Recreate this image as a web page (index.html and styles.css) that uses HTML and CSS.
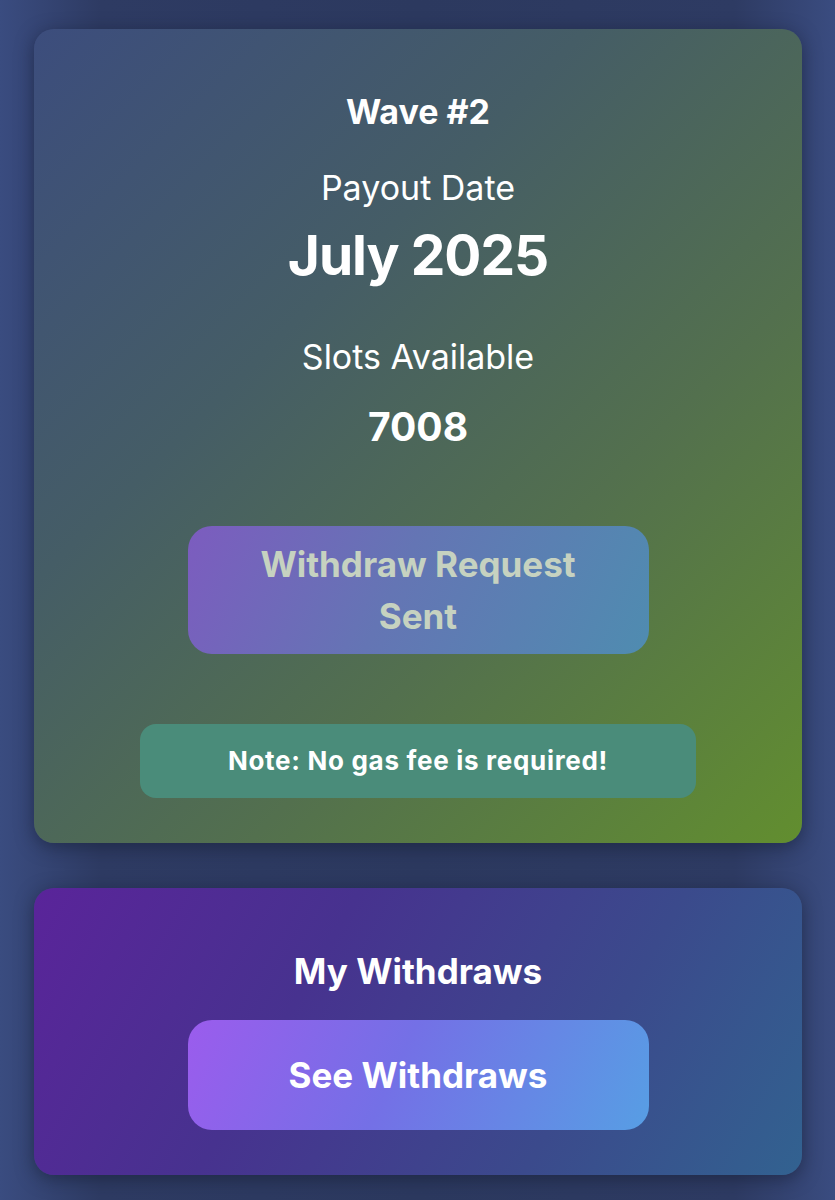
FILE: index.html
```html
<!DOCTYPE html>
<html lang="en">
<head>
  <meta charset="UTF-8">
  <title>Waves</title>
  <link rel="stylesheet" href="styles.css">
</head>
<body>

  <main class="page">

    <!-- wave card -->
    <section class="card wave">
      <h2 class="wave-title">Wave #2</h2>
      <p class="label">Payout Date</p>
      <p class="date">July 2025</p>
      <p class="label slots-label">Slots Available</p>
      <p class="slots">7008</p>

      <button class="btn btn-sent" disabled>Withdraw Request<br>Sent</button>

      <div class="note">Note: No gas fee is required!</div>
    </section>

    <!-- withdraws card -->
    <section class="card withdraws">
      <h2 class="withdraws-title">My Withdraws</h2>
      <button class="btn btn-see">See Withdraws</button>
    </section>

  </main>

</body>
</html>
```

FILE: styles.css
```css
/* ====== page ====== */
html, body {
  margin: 0;
  height: 100%;
}
body {
  font-family: Inter, "Noto Sans", sans-serif;
  color: #fff;
  background: linear-gradient(90deg, #3a4c80 0%, #2e3b63 12%, #2c395f 50%, #2e3b63 88%, #3a4c80 100%);
  overflow: hidden;
}
.page {
  display: flex;
  flex-direction: column;
  gap: 45px;
  padding: 29px 33px 0 34px;
}
p, h2 {
  margin: 0;
}

/* ====== cards ====== */
.card {
  border-radius: 20px;
  display: flex;
  flex-direction: column;
  align-items: center;
  text-align: center;
  box-shadow: 0 4px 18px rgba(20, 28, 50, 0.55);
}
.wave {
  height: 814px;
  box-sizing: border-box;
  padding-top: 65px;
  background: linear-gradient(135deg, #3c4d7d 0%, #455d66 35%, #53704e 65%, #628e2f 100%);
}
.withdraws {
  height: 287px;
  box-sizing: border-box;
  padding-top: 63px;
  background: linear-gradient(120deg, #5a249a 0%, #47328f 35%, #3b4a8c 70%, #326290 100%);
}

/* ====== text ====== */
.wave-title {
  font-size: 34px;
  line-height: 36px;
  font-weight: 700;
}
.label {
  font-size: 34px;
  line-height: 40px;
  font-weight: 400;
  margin-top: 38px;
}
.slots-label {
  margin-top: 0;
}
.date {
  font-size: 55px;
  line-height: 60px;
  font-weight: 700;
  margin-top: 17px;
  margin-bottom: 52px;
  letter-spacing: -1px;
}
.slots {
  font-size: 39px;
  line-height: 44px;
  font-weight: 700;
  margin-top: 28px;
}
.withdraws-title {
  font-size: 35px;
  line-height: 40px;
  font-weight: 700;
}

/* ====== buttons ====== */
.btn {
  font-family: inherit;
  font-weight: 700;
  font-size: 35px;
  border: none;
  width: 461px;
  border-radius: 24px;
}
.btn-sent {
  margin-top: 77px;
  height: 128px;
  line-height: 52px;
  padding: 0;
  color: #c6d2c0;
  background: linear-gradient(115deg, #7c5cbf 0%, #6475b4 45%, #4f8cb0 100%);
}
.btn-see {
  margin-top: 29px;
  height: 110px;
  color: #fff;
  cursor: pointer;
  background: linear-gradient(115deg, #9b5ced 0%, #7470e6 45%, #579ee4 100%);
}

/* ====== note ====== */
.note {
  margin-top: 70px;
  width: 556px;
  height: 74px;
  line-height: 74px;
  border-radius: 16px;
  background: #4a8c7a;
  font-size: 26px;
  font-weight: 700;
  letter-spacing: 0.7px;
}
```
